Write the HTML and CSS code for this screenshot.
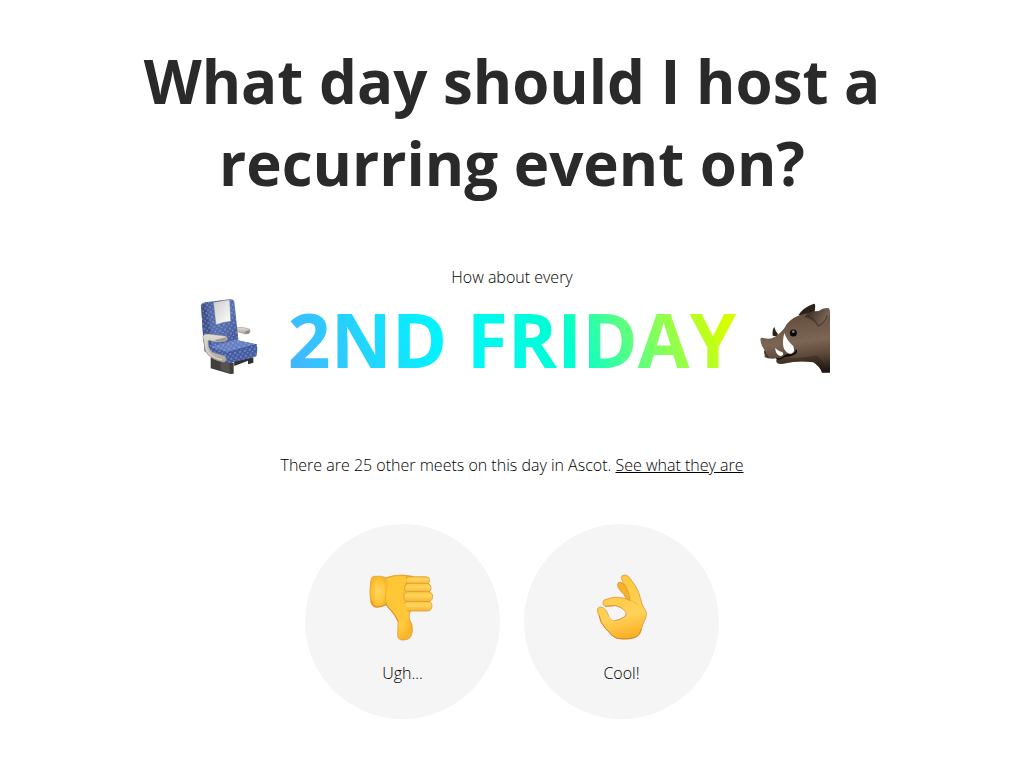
FILE: index.html
```html
<!DOCTYPE html>
<html lang="en">
<head>
<meta charset="utf-8">
<title>What day should I host a recurring event on?</title>
<link rel="stylesheet" href="styles.css">
</head>
<body>
<main class="page">
  <h1 class="title">What day should I host a recurring event on?</h1>
  <p class="lead">How about every</p>
  <div class="answer">
    <svg class="seat" viewBox="-18 0 258 285" aria-hidden="true">
      <defs>
        <pattern id="dots" width="15" height="15" patternUnits="userSpaceOnUse" patternTransform="rotate(-12)">
          <circle cx="3" cy="3" r="1.9" fill="#b7c6f0"/><circle cx="10" cy="10" r="1.9" fill="#a5b6e8"/>
        </pattern>
        <linearGradient id="back" x2="1" y2="1"><stop stop-color="#4a5d96"/><stop offset=".5" stop-color="#566fb0"/><stop offset="1" stop-color="#3b4d86"/></linearGradient>
        <linearGradient id="cloth" x2="1" y2="1"><stop stop-color="#ccc"/><stop offset="1" stop-color="#fff"/></linearGradient>
        <linearGradient id="arm" x2="0" y2="1"><stop stop-color="#e4dfd6"/><stop offset="1" stop-color="#aaa49b"/></linearGradient>
      </defs>
      <path d="M62 202L131 219V251L121 252L62 235Z" fill="#403f3b"/>
      <path d="M92 213L119 221V248L92 240Z" fill="#56544f"/>
      <path d="M132 214L190 202V218L174 223V212L133 228Z" fill="#302f2d"/>
      <path d="M33 46Q35 39 46 37L121 28Q131 27 133 36L145 148L104 172L62 194L44 184L39 135Z" fill="url(#back)"/>
      <path d="M33 46L46 39L65 135L63 180L44 184L39 135Z" fill="#34477d" opacity=".65"/>
      <path d="M33 46Q35 39 46 37L121 28Q131 27 133 36L145 148L104 172L44 184L39 135Z" fill="url(#dots)"/>
      <path d="M70 37L119 29L122 94Q99 96 78 104Z" fill="url(#cloth)" stroke="#777b86" stroke-width="1.3"/>
      <path d="M60 170L135 149L200 163Q204 178 199 199L119 220Q106 221 101 211L62 194Z" fill="#455c9f"/>
      <path d="M60 170L135 149L200 163L115 187Z" fill="#667fc3"/>
      <path d="M60 170L135 149L200 163Q204 178 199 199L119 220Q106 221 101 211L62 194Z" fill="url(#dots)"/>
      <path d="M114 187L200 163" stroke="#344b8d" stroke-width="2"/>
      <path d="M141 113Q157 109 178 117Q183 124 177 130L166 132L143 125Z" fill="url(#arm)" stroke="#777169" stroke-width="1.2"/>
      <path d="M165 125L178 119Q180 129 174 131L166 131Z" fill="#8f8980"/>
      <path d="M38 139Q44 130 55 132L105 138Q114 140 111 150L105 154L80 156L55 151Q53 176 67 187L105 198Q113 206 104 217L93 215Q66 208 51 191Q43 182 42 153Z" fill="url(#arm)" stroke="#8c867e" stroke-width="1.3"/>
      <path d="M75 149L108 142Q113 149 105 154L80 156Z" fill="#a29b92"/>
      <path d="M46 144Q45 178 57 190Q70 204 96 209" fill="none" stroke="#dcd7ce" stroke-width="4"/>
    </svg>
    <strong class="day">2ND FRIDAY</strong>
    <svg class="boar" viewBox="0 0 270 285" aria-hidden="true">
      <defs>
        <linearGradient id="fur" x1=".5" x2=".65" y2="1"><stop stop-color="#5f4a3a"/><stop offset=".5" stop-color="#7c6553"/><stop offset=".75" stop-color="#5b4738"/><stop offset="1" stop-color="#201813"/></linearGradient>
        <linearGradient id="ear" x2="1" y2=".4"><stop stop-color="#2e231c"/><stop offset="1" stop-color="#806958"/></linearGradient>
      </defs>
      <path d="M145 76Q159 52 192 41Q198 40 194 65L178 76Z" fill="#2c211a"/>
      <path d="M68 137Q66 119 73 111Q75 122 84 132L80 139Z" fill="#25221f"/>
      <path d="M31 147Q34 141 44 145Q62 149 75 140Q98 126 111 101Q130 80 158 73Q180 68 205 64L240 62V248H216Q209 229 190 217Q159 212 129 216L107 220Q90 224 82 219Q76 213 82 205Q58 209 44 202L43 179Q35 169 33 159Z" fill="url(#fur)"/>
      <path d="M129 216L107 220Q90 224 82 219Q76 213 82 205L104 201Q150 209 200 196Q222 212 230 248H216Q209 229 190 217Q159 212 129 216Z" fill="#2b1d15" opacity=".4"/>
      <path d="M164 80Q180 61 205 64Q222 51 237 55Q245 69 232 89Q222 105 205 109Q198 95 164 80Z" fill="url(#ear)"/>
      <path d="M174 78Q199 92 204 108Q226 99 232 76" fill="none" stroke="#2b211a" stroke-width="4" opacity=".55"/>
      <path d="M78 203Q91 209 101 198Q108 190 119 193Q136 191 138 177Q145 184 138 191Q127 199 104 201Q89 213 79 207Z" fill="#110e0d"/>
      <path d="M44 183Q45 195 56 203" fill="none" stroke="#3e2f25" stroke-width="4"/>
      <circle cx="130" cy="129" r="10.5" fill="#090909"/><circle cx="130" cy="125" r="3.5" fill="#9a9a9a"/>
      <path d="M103 129Q112 154 129 167Q138 184 123 191Q109 192 101 174Q96 154 103 129Z" fill="#fff"/>
      <path d="M75 174Q85 183 98 187Q102 195 94 198Q79 199 75 174Z" fill="#fff"/>
    </svg>
  </div>
  <p class="note">There are 25 other meets on this day in Ascot. <a class="link" href="#">See what they are</a></p>
  <div class="choices">
    <button class="choice">
      <svg class="hand" viewBox="0 0 255 255" aria-hidden="true">
        <defs>
          <radialGradient id="skin"><stop stop-color="#ffd566"/><stop offset=".65" stop-color="#ffc83b"/><stop offset="1" stop-color="#f8b529"/></radialGradient>
          <linearGradient id="finger" x2="0" y2="1"><stop stop-color="#ffc638"/><stop offset=".4" stop-color="#ffd460"/><stop offset="1" stop-color="#f8b62b"/></linearGradient>
        </defs>
        <g stroke="#d9902c" stroke-width="2" stroke-linejoin="round">
          <path d="M79 38Q100 29 132 30L158 34L156 133Q144 145 149 164Q159 178 157 199Q155 224 132 225Q115 227 113 213L114 170Q107 153 91 135Q76 124 75 94Z" fill="url(#skin)"/>
          <path d="M41 34Q61 31 79 38Q87 43 80 69Q75 99 79 119Q67 125 52 127Q36 128 32 111Q27 83 32 48Q34 36 41 34Z" fill="url(#skin)" stroke="#e5a02e"/>
          <rect x="137" y="35" width="72" height="23" rx="11" fill="url(#finger)"/>
          <rect x="134" y="55" width="79" height="28" rx="13" fill="url(#finger)"/>
          <rect x="132" y="108" width="84" height="30" rx="14" fill="url(#finger)"/>
          <rect x="131" y="80" width="87" height="30" rx="14" fill="url(#finger)"/>
        </g>
        <path d="M78 42Q94 34 134 33Q145 42 134 58Q124 96 137 127Q148 145 143 166L122 178Q112 149 94 132Q80 122 76 94Z" fill="#ffc638"/>
        <path d="M136 58Q126 84 134 116" fill="none" stroke="#eaa123" stroke-width="3" opacity=".5"/>
        <path d="M80 44Q84 60 77 84Q75 100 77 118" fill="none" stroke="#f0ac2c" stroke-width="2.5"/>
        <path d="M35 108Q39 127 53 126Q67 125 78 119Q84 127 99 141Q108 154 115 170" fill="none" stroke="#c9751c" stroke-width="2"/>
      </svg>
      <span class="label">Ugh...</span>
    </button>
    <button class="choice">
      <svg class="hand" viewBox="-18 0 255 255" aria-hidden="true">
        <defs><linearGradient id="palm" x1=".4" x2=".6" y2="1"><stop stop-color="#ffc83e"/><stop offset=".65" stop-color="#ffd159"/><stop offset="1" stop-color="#faae20"/></linearGradient></defs>
        <path d="M98 58Q99 50 107 52Q118 57 126 67L142 101L126 104Q116 85 105 76Q97 68 98 58Z" fill="#f8b429" stroke="#ce8125" stroke-width="2"/>
        <path d="M109 38Q109 31 119 30Q129 30 137 43Q154 63 161 82Q168 104 171 117L184 142Q186 151 181 162Q173 176 169 193Q166 208 154 216Q137 223 114 222Q93 222 83 213L62 191Q45 174 42 151Q34 138 38 131Q42 123 54 128Q63 134 67 143Q74 164 88 167Q106 166 122 153Q126 146 119 139Q108 126 91 122L60 124Q52 119 54 110Q56 103 67 102Q86 94 101 97Q122 99 135 106Q134 85 123 66Q110 48 109 38Z" fill="url(#palm)" stroke="#d68a26" stroke-width="2" stroke-linejoin="round"/>
        <path d="M91 122Q107 125 121 139Q128 147 118 156Q103 165 88 167Q79 165 73 156Q71 144 76 133Q81 125 91 122Z" fill="#f5f5f5"/>
        <path d="M60 124L91 122Q110 125 121 139Q127 147 119 155Q104 165 88 167" fill="none" stroke="#cd7e20" stroke-width="2"/>
        <path d="M42 151Q46 175 62 191L83 213Q93 222 114 222Q137 223 154 216Q166 208 169 193" fill="none" stroke="#cc791c" stroke-width="2"/>
        <path d="M126 104Q149 107 160 120" fill="none" stroke="#efa92a" stroke-width="3" opacity=".7"/>
      </svg>
      <span class="label">Cool!</span>
    </button>
  </div>
</main>
</body>
</html>
```
FILE: styles.css
```css
* { box-sizing: border-box; }
body {
  margin: 0;
  background: #fff;
  color: #2a2a2a;
  font-family: "Open Sans", sans-serif;
  font-size: 16px;
  font-weight: 300;
  line-height: 22px;
}
.page { display: flex; flex-direction: column; align-items: center; padding-top: 40px; text-align: center; }
.title { width: 800px; margin: 0; font-size: 60px; font-weight: 700; line-height: 82px; }
.lead { margin: 62px 0 0; color: #000; }
.answer { display: flex; width: 656px; height: 95px; margin-top: 2px; }
.seat { flex: none; width: 86px; height: 95px; }
.boar { flex: none; width: 90px; height: 95px; }
.day {
  flex: none;
  width: 480px;
  height: 98px;
  padding-left: 4px;
  font-size: 75px;
  font-weight: 700;
  line-height: 98px;
  white-space: nowrap;
  color: transparent;
  background: linear-gradient(70deg, #48b1ff 3%, #00f5ff 37%, #00ffd0 61%, #7aff66 77%, #d8ff00 93%);
  background-clip: text;
  -webkit-background-clip: text;
}
.note { margin: 69px 0 0; color: #000; }
.link { color: inherit; text-decoration: underline; }
.choices { display: flex; gap: 24px; margin-top: 48px; }
.choice {
  display: flex;
  flex-direction: column;
  align-items: center;
  width: 195px;
  height: 195px;
  padding: 41px 0 0;
  border: 0;
  border-radius: 50%;
  background: #f5f5f5;
  color: #000;
  font: inherit;
}
.hand { width: 85px; height: 85px; }
.label { margin-top: 12px; }
```
